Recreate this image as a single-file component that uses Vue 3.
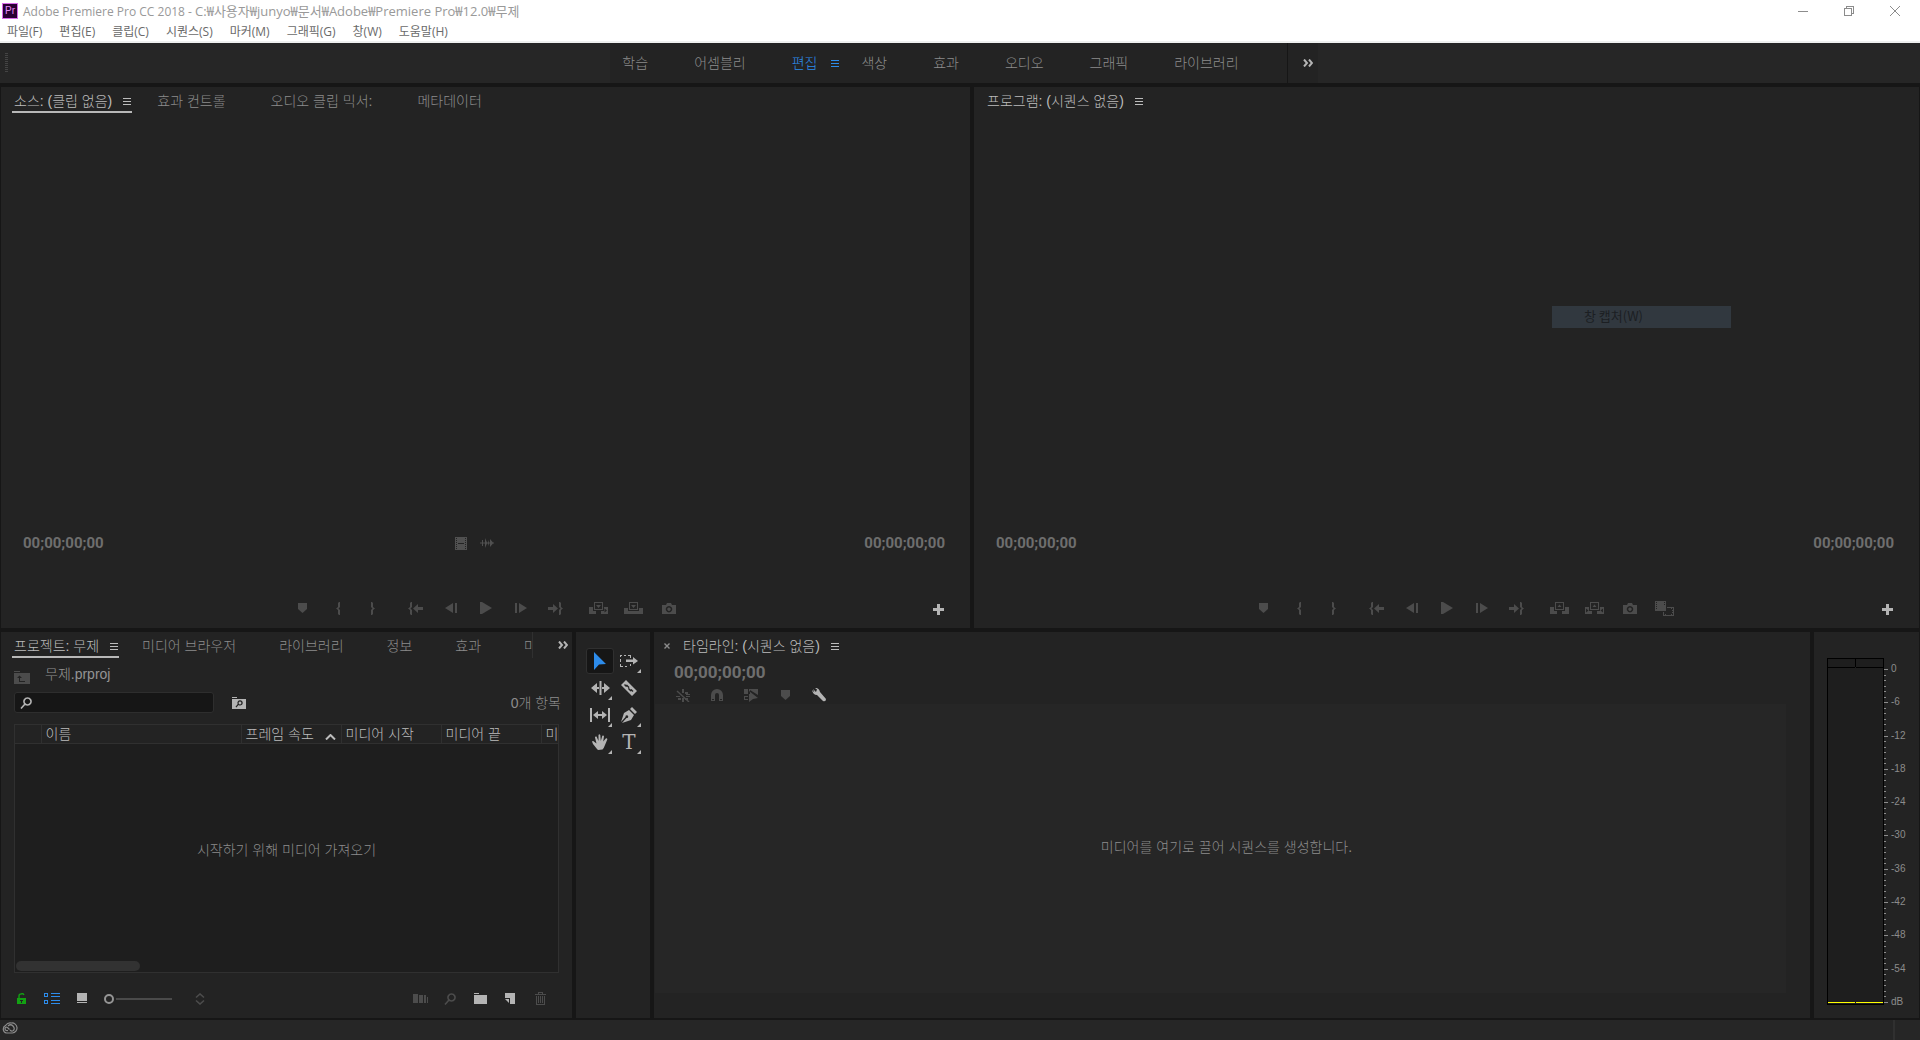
<script setup>
import { h, ref } from 'vue'

// Each icon: [width, height, filled path, optional stroked path, optional stroke width]
const frame = 'M5 0H14V8H5ZM6 1V7H13V1Z'
const icons = {
  marker: [9, 10, 'M0 0H9V6L4.5 10L0 6Z'],
  braceL: [4, 13, 'M2 1L3 0H4V5L2.5 6.5L4 8V13H3L2 12V8L0 6.5L2 5Z'],
  braceR: [4, 13, 'M2 1L1 0H0V5L1.5 6.5L0 8V13H1L2 12V8L4 6.5L2 5Z'],
  goIn: [15, 13, 'M2 1L3 0H4V5L2.5 6.5L4 8V13H3L2 12V8L0 6.5L2 5ZM5 6.5L10 2V5H15V8H10V11Z'],
  goOut: [15, 13, 'M13 1L12 0H11V5L12.5 6.5L11 8V13H12L13 12V8L15 6.5L13 5ZM10 6.5L5 2V5H0V8H5V11Z'],
  stepBack: [12, 10, 'M0 5L8 0V10ZM10 0H12V10H10Z'],
  play: [12, 12, 'M0 0H2L12 6L2 12H0Z'],
  stepForward: [12, 10, 'M12 5L4 0V10ZM0 0H2V10H0Z'],
  insert: [19, 12, frame + 'M7 3H12L9.5 6ZM0 5H4V9H7V12H0ZM12 9H15V5H19V12H12ZM15.5 6.5V10.5L18 8.5Z'],
  overwrite: [19, 12, frame + 'M7 3H12L9.5 6ZM0 6H4V9H15V6H19V12H0Z'],
  lift: [19, 12, frame + 'M7.5 5L9.5 2.5L11.5 5ZM0 5H4V9H7V12H0ZM12 9H15V5H19V12H12Z'],
  extract: [19, 12, frame + 'M7.5 5L9.5 2.5L11.5 5ZM0 5H4V9H7V12H0ZM1 6.5V10.5L3.5 8.5ZM12 9H15V5H19V12H12ZM18 6.5V10.5L15.5 8.5Z'],
  camera: [14, 11, 'M0 2H4L5 0H9L10 2H14V11H0ZM7 3a3.2 3.2 0 1 0 .01 0ZM7 4.5a1.7 1.7 0 1 1 -.01 0Z'],
  compare: [19, 15, 'M0 0H11V10H0ZM1 1V2H2V1ZM1 3V4H2V3ZM1 5V6H2V5ZM1 7V8H2V7ZM9 1V2H10V1ZM9 3V4H10V3ZM12 6H19V15H8V11H9V14H10V13H11V14H16V13H17V14H18V12H17V11H18V10H17V9H18V7H17V8H16V7H12Z'],
  film: [12, 13, 'M0 0H12V13H0ZM1 1V2H2V1ZM1 3V4H2V3ZM1 5V6H2V5ZM1 7V8H2V7ZM1 9V10H2V9ZM1 11V12H2V11ZM10 1V2H11V1ZM10 3V4H11V3ZM10 5V6H11V5ZM10 7V8H11V7ZM10 9V10H11V9ZM10 11V12H11V11ZM3 6V7H9V6Z'],
  wave: [14, 10, 'M0 4.5H14V5.5H0ZM2 2V4.5H3V2ZM2 5.5V8H3V5.5ZM5 0L7 4.5H5ZM5 10L7 5.5H5ZM8 2L9 4.5H8ZM8 8L9 5.5H8ZM10 1L13 4.5H10ZM10 9L13 5.5H10Z'],
  plus: [11, 11, 'M4 0H7V4H11V7H7V11H4V7H0V4H4Z'],
  menu: [8, 7, 'M0 0H8V1H0ZM0 3H8V4H0ZM0 6H8V7H0Z'],
  more: [10, 8, '', 'M1 .5L4 4L1 7.5M6 .5L9 4L6 7.5', 2],
  close: [6, 6, '', 'M.5 .5L5.5 5.5M5.5 .5L.5 5.5', 1.4],
  binUp: [16, 13, 'M0 0H6V1H0ZM0 2H16V13H0ZM3 7H5V11H11V10H6V7H8L5.5 4.5Z'],
  lens: [12, 12, '', 'M1 11.5L5 7M7.5 1a3.5 3.5 0 1 0 .01 0Z', 1.6],
  findBin: [14, 12, 'M0 0H5V1H0ZM0 2H14V12H0ZM8 3.3a2.6 2.6 0 0 0 -2.3 3.8L3.5 9.8L4.3 10.6L6.6 8A2.6 2.6 0 1 0 8 3.3ZM8 4.6a1.4 1.4 0 1 1 -.01 0Z'],
  sort: [11, 6, '', 'M1 5.5L5.5 1L10 5.5', 2],
  lock: [9, 11, 'M0 5H9V11H0ZM3 7V8H4V10H5V8H6V7Z', 'M2 5V3Q2 1 4 1Q6 0 7 2', 1.4],
  list: [16, 11, 'M0 0H4V4H0ZM1 1V3H3V1ZM0 7H4V11H0ZM1 8V10H3V8ZM7 0H16V1H7ZM7 3H16V4H7ZM7 7H16V8H7ZM7 10H16V11H7Z'],
  thumbs: [10, 11, 'M0 0H10V8H0ZM0 9H10V10H0Z'],
  updown: [10, 12, '', 'M1 4.5L5 1L9 4.5M1 7.5L5 11L9 7.5', 1.6],
  automate: [15, 9, 'M0 0H5V9H0ZM6 1H10V9H6ZM11 1H13V9H11ZM14 3H15V9H14Z'],
  folder: [13, 11, 'M0 0H5V1H0ZM0 2H13V11H0Z'],
  newItem: [10, 11, 'M0 0H10V11H5V5H0ZM0 6H4V10Z'],
  trash: [11, 13, 'M0 2H11V3H0ZM3 0H8V2H7V1H4V2H3ZM1 4H2V12H9V4H10V13H1ZM3 4H4V11H3ZM5 4H6V11H5ZM7 4H8V11H7Z'],
  select: [12, 18, 'M0 0V18L5 12.5L12 12Z'],
  trackSelect: [18, 12, 'M0 0H2V1H1V2H0ZM4 0H6V1H4ZM8 0H11V3H10V1H8ZM0 4H1V7H0ZM0 9H1V11H3V12H0ZM5 11H7V12H5ZM9 11H11V9H10V11H9ZM6 4.5H13V2L18 6L13 9.5V7H6Z'],
  ripple: [19, 14, 'M8.5 0H10.5V14H8.5ZM0 7L6 2V6H8V8H6V12ZM19 7L13 2V6H11V8H13V12Z'],
  razor: [16, 16, 'M5 0L16 11L11 16L0 5ZM4 4L3 5L5 7L6 6.5L7.5 8L7 9L9.5 11.5L10.5 11L11.5 12L12.5 11L10.5 9L9.5 9.5L8 8L8.5 7L6 4.5L5 5Z'],
  slip: [20, 14, 'M0 0H2V14H0ZM18 0H20V14H18ZM3 7L8 3V6H12V3L17 7L12 11V8H8V11Z'],
  pen: [16, 16, 'M11 0L16 5L14 7L9 2ZM8 3L13 8L10 13L1 16L5.5 11A1.4 1.4 0 1 0 4.5 10L0 15L3 6Z'],
  hand: [16, 16, 'M5 15L1 10L0 7.5Q1 6.5 2.5 8L4.5 9.5L3 3.5Q3 2 4.5 2.5L6.5 7L6.5 1Q7.3 -.5 8.3 1L8.8 7L10.3 1.8Q11.5 .8 12 2.3L11.2 7.5L14 4.2Q15.5 4 15.3 5.5L13 11Q12 14 10.5 15.5L6 16Z'],
  nest: [14, 13, 'M6 0H8V4H6ZM0 7H4V8H0ZM10 7H14V8H10ZM9 3H12V5H9ZM10 5H14V6H10ZM6 9H8V13H6ZM2 9H5V11H2ZM9 9H12V11H9Z', 'M1 2L13 13', 1.4],
  magnet: [12, 12, 'M0 12V6A6 6 0 0 1 12 6V12H8V6A2 2 0 0 0 4 6V12ZM1 10V11H3V10ZM9 10V11H11V10Z'],
  linked: [14, 13, 'M0 0H4V5H0ZM5 0H14V6L6 1V5H5ZM0 7H4V8H1V10H4V11H0ZM5 2L14 9L9 10L5 13Z'],
  wrench: [14, 14, 'M1 1L4 4L5 1.5L3 0Q7 -.5 8 4L14 11Q14 14 11 13L5 7Q1 7 0 2L2.5 4.5Z'],
  minimize: [10, 1, 'M0 0H10V1H0Z'],
  restore: [10, 10, 'M0 2H8V10H0ZM1 3V9H7V3ZM2 0H10V8H8V7H9V1H3V2H2Z'],
  exit: [10, 10, '', 'M0 0L10 10M10 0L0 10', 1],
  cloud: [16, 12, '', 'M4.5 11A4 4 0 0 1 3.5 3.5Q6 0 9.5 1A5 5 0 0 1 10.5 11ZM6 8.5Q3 9 3 6.5Q3.5 4.5 5.5 5.5L7.5 7.5M6 4Q8.5 1.5 11 4Q13.5 7 11 8.8Q9.5 9.5 8 8', 1.2],
}

const Icon = ({ name }) => {
  const [w, ht, fill, stroke, sw] = icons[name]
  return h('svg', { width: w, height: ht, viewBox: `0 0 ${w} ${ht}`, 'aria-hidden': 'true' }, [
    fill && h('path', { d: fill, fill: 'currentColor', 'fill-rule': 'evenodd' }),
    stroke && h('path', { d: stroke, fill: 'none', stroke: 'currentColor', 'stroke-width': sw }),
  ])
}
Icon.props = ['name']

const menus = ['파일(F)', '편집(E)', '클립(C)', '시퀀스(S)', '마커(M)', '그래픽(G)', '창(W)', '도움말(H)']
const workspaces = ['학습', '어셈블리', '편집', '색상', '효과', '오디오', '그래픽', '라이브러리']
const activeWorkspace = ref('편집')
const monitors = [
  {
    id: 'source',
    tabs: ['소스: (클립 없음)', '효과 컨트롤', '오디오 클립 믹서:', '메타데이터'],
    media: true,
    right: ['insert', 'overwrite', 'camera'],
  },
  {
    id: 'program',
    tabs: ['프로그램: (시퀀스 없음)'],
    media: false,
    right: ['lift', 'extract', 'camera', 'compare'],
  },
]
const marks = ['marker', 'braceL', 'braceR']
const transport = ['goIn', 'stepBack', 'play', 'stepForward', 'goOut']
const projectTabs = ['프로젝트: 무제', '미디어 브라우저', '라이브러리', '정보', '효과', '마커']
const tools = ['select', 'trackSelect', 'ripple', 'razor', 'slip', 'pen', 'hand', 'type']
const activeTool = ref('select')
const timelineTools = ['nest', 'magnet', 'linked', 'marker', 'wrench']
const levels = ['0', '-6', '-12', '-18', '-24', '-30', '-36', '-42', '-48', '-54']
const search = ref('')
const zoom = ref(0)
</script>

<template>
  <div class="app">
    <header class="titlebar">
      <span class="logo">Pr</span>
      <h1>Adobe Premiere Pro CC 2018 - <span class="file">C:₩사용자₩junyo₩문서₩Adobe₩Premiere Pro₩12.0₩무제</span></h1>
      <div class="window-buttons">
        <button aria-label="최소화"><Icon name="minimize" /></button>
        <button aria-label="이전 크기로"><Icon name="restore" /></button>
        <button aria-label="닫기"><Icon name="exit" /></button>
      </div>
    </header>
    <nav class="menubar">
      <button v-for="m in menus" :key="m">{{ m }}</button>
    </nav>

    <div class="workspaces">
      <span class="grip"></span>
      <div class="workspace-strip">
        <button
          v-for="w in workspaces"
          :key="w"
          :class="{ active: w === activeWorkspace }"
          @click="activeWorkspace = w"
        >
          {{ w }}<Icon v-if="w === activeWorkspace" name="menu" />
        </button>
      </div>
      <button class="workspace-more" aria-label="더 보기"><Icon name="more" /></button>
    </div>

    <main class="panels">
      <div class="row upper">
        <section v-for="m in monitors" :key="m.id" class="panel monitor" :class="m.id">
          <div class="tabs">
            <button v-for="(t, i) in m.tabs" :key="t" :class="{ active: i === 0 }">
              {{ t }}<Icon v-if="i === 0" name="menu" />
            </button>
          </div>
          <div class="view"></div>
          <div class="times">
            <span class="timecode">00;00;00;00</span>
            <span v-if="m.media" class="media"><Icon name="film" /><Icon name="wave" /></span>
            <span class="timecode">00;00;00;00</span>
          </div>
          <div class="controls">
            <div class="group start">
              <button v-for="c in marks" :key="c" :aria-label="c"><Icon :name="c" /></button>
            </div>
            <div class="group">
              <button v-for="c in transport" :key="c" :aria-label="c"><Icon :name="c" /></button>
            </div>
            <div class="group">
              <button v-for="c in m.right" :key="c" :aria-label="c"><Icon :name="c" /></button>
              <button class="add" aria-label="단추 편집기"><Icon name="plus" /></button>
            </div>
          </div>
        </section>
      </div>

      <div class="row lower">
        <section class="panel project">
          <div class="tab-row">
            <div class="tabs">
              <button v-for="(t, i) in projectTabs" :key="t" :class="{ active: i === 0 }">
                {{ t }}<Icon v-if="i === 0" name="menu" />
              </button>
            </div>
            <button class="tab-more" aria-label="더 보기"><Icon name="more" /></button>
          </div>
          <div class="path"><Icon name="binUp" /><span>무제.prproj</span></div>
          <div class="search-row">
            <label class="search">
              <Icon name="lens" />
              <input v-model="search" type="text" aria-label="검색" />
            </label>
            <button class="find-bin" aria-label="검색 저장소"><Icon name="findBin" /></button>
            <span class="count">0개 항목</span>
          </div>
          <div class="list">
            <table>
              <colgroup>
                <col class="c-label" /><col class="c-name" /><col class="c-data" /><col class="c-data" /><col class="c-data" /><col class="c-data" />
              </colgroup>
              <thead>
                <tr>
                  <th></th>
                  <th>이름</th>
                  <th><span class="sorted">프레임 속도<Icon name="sort" /></span></th>
                  <th>미디어 시작</th>
                  <th>미디어 끝</th>
                  <th>미디어 지속</th>
                </tr>
              </thead>
            </table>
            <p>시작하기 위해 미디어 가져오기</p>
            <span class="thumb"></span>
          </div>
          <div class="footer">
            <button class="green" aria-label="잠금"><Icon name="lock" /></button>
            <button class="blue" aria-label="목록 보기"><Icon name="list" /></button>
            <button class="bright" aria-label="아이콘 보기"><Icon name="thumbs" /></button>
            <input v-model="zoom" type="range" min="0" max="100" aria-label="확대/축소" />
            <button aria-label="정렬"><Icon name="updown" /></button>
            <div class="footer-right">
              <button aria-label="시퀀스 자동화"><Icon name="automate" /></button>
              <button aria-label="찾기"><Icon name="lens" /></button>
              <button class="bright" aria-label="새 저장소"><Icon name="folder" /></button>
              <button class="bright" aria-label="새 항목"><Icon name="newItem" /></button>
              <button aria-label="지우기"><Icon name="trash" /></button>
            </div>
          </div>
        </section>

        <section class="panel tools">
          <button
            v-for="t in tools"
            :key="t"
            :class="{ active: t === activeTool, multi: t !== 'select' && t !== 'razor' }"
            :aria-label="t"
            @click="activeTool = t"
          >
            <span v-if="t === 'type'" class="type">T</span>
            <Icon v-else :name="t" />
          </button>
        </section>

        <section class="panel timeline">
          <div class="tabs">
            <button class="close" aria-label="닫기"><Icon name="close" /></button>
            <button class="active">타임라인: (시퀀스 없음)<Icon name="menu" /></button>
          </div>
          <span class="timecode big">00;00;00;00</span>
          <div class="timeline-tools">
            <button v-for="t in timelineTools" :key="t" :class="{ bright: t === 'wrench' }" :aria-label="t">
              <Icon :name="t" />
            </button>
          </div>
          <div class="drop"><p>미디어를 여기로 끌어 시퀀스를 생성합니다.</p></div>
        </section>

        <section class="panel audio">
          <div class="meter"><span></span><span></span><i></i><i></i></div>
          <div class="scale">
            <div v-for="l in levels" :key="l" class="step">
              <span>{{ l }}</span>
              <i v-for="n in 6" :key="n"></i>
            </div>
            <div class="step last"><span>dB</span><i></i></div>
          </div>
        </section>
      </div>
    </main>

    <footer class="status"><Icon name="cloud" /><span></span></footer>

    <div class="capture">창 캡처(W)</div>
  </div>
</template>

<style>
body {
  margin: 0;
  background: #161616;
}
</style>

<style scoped>
.app {
  position: relative;
  display: flex;
  flex-direction: column;
  min-height: 100vh;
  overflow: hidden;
  background: #161616;
  color: #8c8c8c;
  font: 300 14px/20px "Liberation Sans", "Noto Sans CJK KR", sans-serif;
}
*,
*::before,
*::after {
  box-sizing: border-box;
}
button {
  display: flex;
  align-items: center;
  justify-content: center;
  padding: 0;
  border: 0;
  background: none;
  color: inherit;
  font: inherit;
  white-space: nowrap;
}
svg {
  display: block;
  flex: none;
}
p,
h1 {
  margin: 0;
}

/* title and menu bars */
.titlebar {
  display: flex;
  align-items: center;
  gap: 5px;
  height: 22px;
  padding-left: 2px;
  background: #fff;
}
.logo {
  width: 16px;
  height: 16px;
  border: 1px solid #d86be8;
  background: #2a0033;
  color: #e48bf5;
  font: 10px/14px "Liberation Sans", sans-serif;
  text-align: center;
}
.titlebar h1 {
  color: #999;
  font: 400 12px/20px "Open Sans", "Noto Sans CJK KR", sans-serif;
  white-space: nowrap;
}
.titlebar .file {
  font-size: 13px;
}
.window-buttons {
  display: flex;
  align-self: stretch;
  margin-left: auto;
  margin-right: 2px;
  color: #8c8c8c;
}
.window-buttons button {
  width: 46px;
}
.menubar {
  display: flex;
  gap: 17px;
  height: 21px;
  padding: 1px 0 0 7px;
  border-bottom: 2px solid #eef0ef;
  background: #fff;
  color: #6a6a6a;
  font: 400 12px/20px "Open Sans", "Noto Sans CJK KR", sans-serif;
}

/* workspace bar */
.workspaces {
  display: flex;
  height: 40px;
  margin-bottom: 4px;
  background: #262626;
}
.grip {
  width: 3px;
  height: 20px;
  margin: 10px 0 0 5px;
  background: repeating-linear-gradient(#444 0 1px, #262626 1px 2px);
}
.workspace-strip {
  display: flex;
  gap: 46px;
  margin-left: auto;
  padding: 0 48px 0 12px;
  border-right: 1px solid #161616;
  background: #232323;
}
.workspace-strip button {
  gap: 14px;
}
.workspace-strip .active {
  margin-right: -24px;
  color: #2d8ceb;
}
.workspace-more {
  width: 30px;
  margin-right: auto;
  padding-left: 10px;
  background: #232323;
  color: #b4b4b4;
}

/* panels */
.panels {
  display: flex;
  flex: 1;
  flex-direction: column;
  gap: 4px;
  padding: 0 1px 2px;
}
.row {
  display: grid;
  gap: 4px;
}
.upper {
  flex: 541 0 0;
  grid-template-columns: 969fr 945fr;
}
.lower {
  flex: 386 0 0;
  grid-template-columns: 571fr 74px 1156fr 105px;
}
.panel {
  display: flex;
  flex-direction: column;
  min-width: 0;
  background: #232323;
}
.tabs {
  display: flex;
  gap: 43px;
  height: 26px;
  padding-left: 11px;
}
.monitor .tabs {
  gap: 45px;
}
.tabs button {
  padding-top: 2px;
}
.tabs .active {
  gap: 11px;
  margin-right: -20px;
  padding: 2px 1px 0 2px;
  color: #bcbcbc;
}
.source .tabs .active,
.project .tabs .active {
  border-bottom: 2px solid #b8b8b8;
  padding-top: 4px;
}

/* monitors */
.view {
  flex: 1;
}
.times {
  display: flex;
  align-items: center;
  justify-content: space-between;
  height: 20px;
  margin-bottom: 35px;
  padding: 0 25px 0 22px;
}
.timecode {
  color: #6e6e6e;
  font: 700 15px/20px Roboto, sans-serif;
}
.media {
  display: flex;
  align-items: center;
  gap: 13px;
  margin-right: 20px;
  color: #505050;
}
.controls {
  display: grid;
  grid-template-columns: 1fr auto 1fr;
  column-gap: 8px;
  height: 40px;
  color: #4c4c4c;
}
.group {
  display: flex;
}
.group.start {
  justify-content: flex-end;
}
.group button {
  width: 35px;
}
.group .add {
  margin: 2px 14px 0 auto;
  color: #b4b4b4;
}

/* project */
.tab-row {
  display: flex;
}
.tab-row .tabs {
  flex: 1;
  overflow: hidden;
  border-right: 1px solid #303030;
}
.tab-more {
  width: 39px;
  padding-left: 22px;
  padding-right: 2px;
  color: #b4b4b4;
}
.path {
  display: flex;
  align-items: center;
  gap: 15px;
  height: 34px;
  padding: 0 0 2px 13px;
  color: #949494;
}
.path svg {
  margin-top: 6px;
  color: #4c4c4c;
}
.search-row {
  display: flex;
  align-items: center;
  height: 21px;
  padding: 0 11px 0 13px;
}
.search {
  display: flex;
  align-items: center;
  width: 200px;
  height: 21px;
  padding-left: 5px;
  border: 1px solid #2e2e2e;
  border-radius: 3px;
  background: #161616;
  color: #b4b4b4;
}
.search input {
  flex: 1;
  min-width: 0;
  border: 0;
  outline: 0;
  background: none;
  color: inherit;
  font: inherit;
}
.find-bin {
  margin-left: 18px;
  color: #b4b4b4;
}
.count {
  margin-left: auto;
}
.list {
  position: relative;
  display: flex;
  flex: 1;
  flex-direction: column;
  margin: 11px 13px 0;
  overflow: hidden;
  border: 1px solid #303030;
  background: #1e1e1e;
}
table {
  width: 626px;
  border-collapse: collapse;
  table-layout: fixed;
  background: #232323;
}
.c-label {
  width: 26px;
}
.c-name {
  width: 200px;
}
.c-data {
  width: 100px;
}
th {
  height: 18px;
  padding: 0 0 0 4px;
  border-right: 1px solid #303030;
  border-bottom: 1px solid #303030;
  color: #bcbcbc;
  font-weight: 300;
  line-height: 18px;
  text-align: left;
  white-space: nowrap;
}
.sorted {
  display: flex;
  align-items: center;
  justify-content: space-between;
  padding-right: 5px;
}
.sorted svg {
  margin-top: 6px;
}
.list p {
  margin: auto;
  padding-bottom: 16px;
}
.thumb {
  position: absolute;
  bottom: 1px;
  left: 1px;
  width: 124px;
  height: 10px;
  border-radius: 5px;
  background: #323232;
}
.footer {
  display: flex;
  align-items: center;
  height: 45px;
  padding: 6px 17px 0 15px;
  color: #4c4c4c;
}
.green {
  width: 10px;
  color: #13a113;
}
.blue {
  margin-left: 18px;
  color: #2d8ceb;
}
.bright {
  color: #b4b4b4;
}
.footer > .bright {
  margin: 0 17px;
}
.footer input {
  width: 68px;
  height: 12px;
  margin: 0 23px 0 0;
  appearance: none;
  background: linear-gradient(#4a4a4a, #4a4a4a) 0 50% / 100% 2px no-repeat;
}
.footer input::-webkit-slider-thumb {
  width: 10px;
  height: 10px;
  appearance: none;
  border: 2px solid #959595;
  border-radius: 5px;
  background: #232323;
  box-shadow: 0 0 0 2px #232323;
}
.footer-right {
  display: flex;
  align-items: center;
  margin-left: auto;
}
.footer-right button {
  width: 30px;
}

/* tools */
.tools {
  display: grid;
  grid-template-columns: 28px 28px;
  grid-auto-rows: 26px;
  gap: 1px;
  align-content: start;
  padding: 16px 0 0 10px;
  color: #b4b4b4;
}
.tools button {
  position: relative;
  border: 1px solid transparent;
  border-radius: 3px;
}
.tools .active {
  border-color: #303030;
  background: #161616;
  color: #2d8ceb;
}
.tools .multi::after {
  content: "";
  position: absolute;
  right: 1px;
  bottom: 0;
  border: 2px solid transparent;
  border-right-color: #b4b4b4;
  border-bottom-color: #b4b4b4;
}
.type {
  font: 400 20px/20px "DejaVu Serif", serif;
}

/* timeline */
.timeline .tabs {
  gap: 11px;
  padding-left: 10px;
}
.timeline .tabs .close {
  color: #8c8c8c;
}
.timecode.big {
  padding: 4px 0 0 20px;
  font-size: 17px;
}
.timeline-tools {
  display: flex;
  align-items: center;
  height: 22px;
  padding: 4px 0 0 12px;
  color: #4c4c4c;
}
.timeline-tools button {
  width: 34px;
}
.timeline-tools .bright {
  color: #b4b4b4;
}
.drop {
  display: flex;
  flex: 1;
  align-items: center;
  justify-content: center;
  margin: 0 24px 25px 1px;
  padding: 0 0 4px 12px;
  background: #262626;
}

/* audio meter */
.audio {
  flex-direction: row;
  padding: 26px 0 13px 13px;
}
.meter {
  display: grid;
  grid-template-rows: 8px 1fr;
  grid-template-columns: 1fr 1fr;
  width: 57px;
  gap: 1px;
  padding: 1px;
  background: #1e1e1e;
  outline: 1px solid #000;
  outline-offset: -1px;
}
.meter span {
  box-shadow: 0 1px #000;
}
.meter span + span {
  box-shadow: 0 1px #000, -1px 0 #000;
}
.meter i {
  margin-bottom: 1px;
  border-bottom: 1px solid #ffff00;
}
.scale {
  display: flex;
  flex: 1;
  flex-direction: column;
  margin: 11px 0 2px;
}
.step {
  position: relative;
  display: flex;
  flex: 1;
  flex-direction: column;
  justify-content: space-between;
}
.step i {
  flex: 1;
  width: 2px;
  background: linear-gradient(#8c8c8c, #8c8c8c) 0 0 / 100% 1px no-repeat;
}
.step i:nth-child(2) {
  width: 4px;
}
.step span {
  position: absolute;
  top: -6px;
  left: 7px;
  font: 400 10px/12px "Liberation Sans", sans-serif;
}
.step.last {
  flex: none;
  height: 1px;
}

/* status bar */
.status {
  display: flex;
  justify-content: space-between;
  height: 20px;
  padding: 2px 25px 0 2px;
  background: #262626;
}
.status span {
  width: 2px;
  margin-top: -2px;
  background: #303030;
}

/* fading menu item left over the program monitor */
.capture {
  position: absolute;
  top: 306px;
  right: 189px;
  width: 179px;
  height: 22px;
  padding-left: 32px;
  background: #31383f;
  color: #1c1f23;
  font: 400 13px/20px "Noto Sans CJK KR", sans-serif;
}
</style>
